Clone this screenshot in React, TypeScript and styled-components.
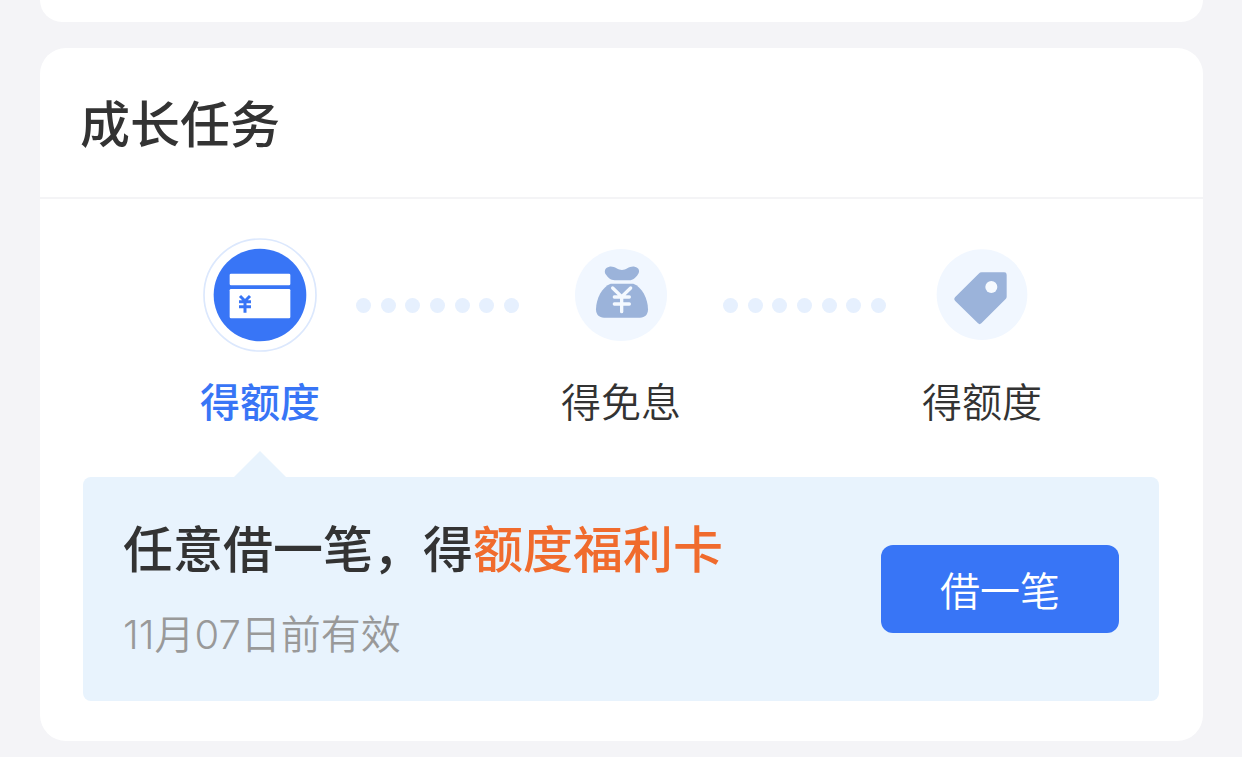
import React from "react";
import styled, { createGlobalStyle } from "styled-components";

const GlobalStyle = createGlobalStyle`
  *, *::before, *::after { box-sizing: border-box; }
  body {
    margin: 0;
    background: #f4f4f7;
    color: #333333;
    font-family: Inter, "Noto Sans CJK SC", sans-serif;
  }
`;

const Page = styled.main`
  display: flex;
  flex-direction: column;
  gap: 26px;
  padding: 0 39px 15px 40px;
`;

const PreviousCard = styled.div`
  height: 22px;
  border-radius: 0 0 26px 26px;
  background: #ffffff;
`;

const Card = styled.section`
  padding-bottom: 40px;
  border-radius: 26px;
  background: #ffffff;
`;

const CardHeader = styled.header`
  padding: 42px 40px 37px;
  border-bottom: 2px solid #f4f4f6;
`;

const CardTitle = styled.h2`
  margin: 0;
  font-size: 50px;
  font-weight: 500;
  line-height: 70px;
`;

const Steps = styled.ol`
  display: flex;
  align-items: flex-start;
  justify-content: space-between;
  margin: 0;
  padding: 39px 161px 46px 160px;
  list-style: none;
`;

const Step = styled.li<{ $active?: boolean }>`
  display: flex;
  flex-direction: column;
  align-items: center;
  gap: 23px;
  width: 120px;
  color: ${(p) => (p.$active ? "#3875f6" : "#333333")};
  font-weight: ${(p) => (p.$active ? 500 : 350)};
`;

const MiddleStep = styled(Step)`
  margin: 0 6px;
`;

const StepIcon = styled.span`
  display: flex;
  align-items: center;
  justify-content: center;
  height: 114px;
`;

const StepLabel = styled.span`
  font-size: 40px;
  line-height: 56px;
  white-space: nowrap;
`;

const Connector = styled.li`
  display: flex;
  justify-content: space-between;
  width: 163px;
  margin-top: 60px;
`;

const Dot = styled.span`
  width: 15px;
  height: 15px;
  border-radius: 50%;
  background: #e6f0fe;
`;

const TaskPanel = styled.div`
  position: relative;
  display: flex;
  align-items: center;
  justify-content: space-between;
  margin: 0 44px 0 43px;
  padding: 38px 40px;
  border-radius: 8px;
  background: #e8f3fd;

  &::before {
    content: "";
    position: absolute;
    left: 151px;
    bottom: 100%;
    width: 52px;
    height: 26px;
    background: inherit;
    clip-path: polygon(50% 0, 100% 100%, 0 100%);
  }
`;

const TaskText = styled.div`
  display: flex;
  flex-direction: column;
  gap: 22px;
`;

const TaskTitle = styled.h3`
  margin: 0;
  font-size: 50px;
  font-weight: 500;
  line-height: 70px;
`;

const Reward = styled.span`
  color: #f06b2d;
`;

const Expiry = styled.p`
  margin: 0;
  color: #999999;
  font-size: 40px;
  font-weight: 350;
  line-height: 56px;
`;

const BorrowButton = styled.button`
  flex: none;
  width: 238px;
  height: 88px;
  padding: 0;
  border: 0;
  border-radius: 12px;
  background: #3875f6;
  color: #ffffff;
  font-family: inherit;
  font-size: 40px;
  font-weight: 350;
  cursor: pointer;
`;

function CardIcon() {
  return (
    <svg width="114" height="114" viewBox="39 22 342 342" fill="none" aria-hidden="true">
      <circle cx="210" cy="193" r="168" stroke="#dce8fd" strokeWidth="5" />
      <circle cx="210" cy="193" r="139" fill="#3875f6" />
      <rect x="119" y="129" width="182" height="35" rx="4" fill="#ffffff" />
      <rect x="119" y="175" width="182" height="88" rx="4" fill="#ffffff" />
      <path d="M150 196L165 211L180 196M147 213H183M147 228H183M165 211V246" stroke="#3875f6" strokeWidth="9" />
    </svg>
  );
}

function BagIcon() {
  return (
    <svg width="92" height="92" viewBox="45 41 276 276" fill="none" aria-hidden="true">
      <circle cx="183" cy="179" r="138" fill="#f1f7ff" />
      <path
        d="M148 94C162 91 174 104 186 104C198 104 209 91 224 94C238 97 240 108 234 117C228 127 219 135 208 135H164C152 135 143 126 137 117C131 107 136 96 148 94Z"
        fill="#9bb3da"
      />
      <path
        d="M152 145H220C246 155 264 190 264 222C264 238 255 247 240 247H132C117 247 108 238 108 222C108 190 126 155 152 145Z"
        fill="#9bb3da"
      />
      <path
        d="M158 158L185 184L212 158M163 185H208M163 206H208M185 184V229"
        stroke="#f4f9ff"
        strokeWidth="10"
        strokeLinecap="round"
      />
    </svg>
  );
}

function TagIcon() {
  return (
    <svg width="92" height="92" viewBox="45 41 276 276" fill="none" aria-hidden="true">
      <circle cx="183" cy="178" r="136" fill="#f1f7ff" />
      <path
        d="M182 111H250Q257 111 257 118V184Q257 188 254 191L181 264Q176 269 171 264L102 196Q97 191 102 186L173 115Q177 111 182 111Z"
        fill="#9bb3da"
      />
      <circle cx="211" cy="155" r="18" fill="#f6faff" />
    </svg>
  );
}

function DottedConnector() {
  return (
    <Connector aria-hidden="true">
      {Array.from({ length: 7 }, (_, i) => (
        <Dot key={i} />
      ))}
    </Connector>
  );
}

export default function App() {
  return (
    <>
      <GlobalStyle />
      <Page>
        <PreviousCard />
        <Card>
          <CardHeader>
            <CardTitle>成长任务</CardTitle>
          </CardHeader>
          <Steps>
            <Step $active aria-current="step">
              <StepIcon><CardIcon /></StepIcon>
              <StepLabel>得额度</StepLabel>
            </Step>
            <DottedConnector />
            <MiddleStep>
              <StepIcon><BagIcon /></StepIcon>
              <StepLabel>得免息</StepLabel>
            </MiddleStep>
            <DottedConnector />
            <Step>
              <StepIcon><TagIcon /></StepIcon>
              <StepLabel>得额度</StepLabel>
            </Step>
          </Steps>
          <TaskPanel>
            <TaskText>
              <TaskTitle>
                任意借一笔，得<Reward>额度福利卡</Reward>
              </TaskTitle>
              <Expiry>11月07日前有效</Expiry>
            </TaskText>
            <BorrowButton type="button">借一笔</BorrowButton>
          </TaskPanel>
        </Card>
      </Page>
    </>
  );
}
